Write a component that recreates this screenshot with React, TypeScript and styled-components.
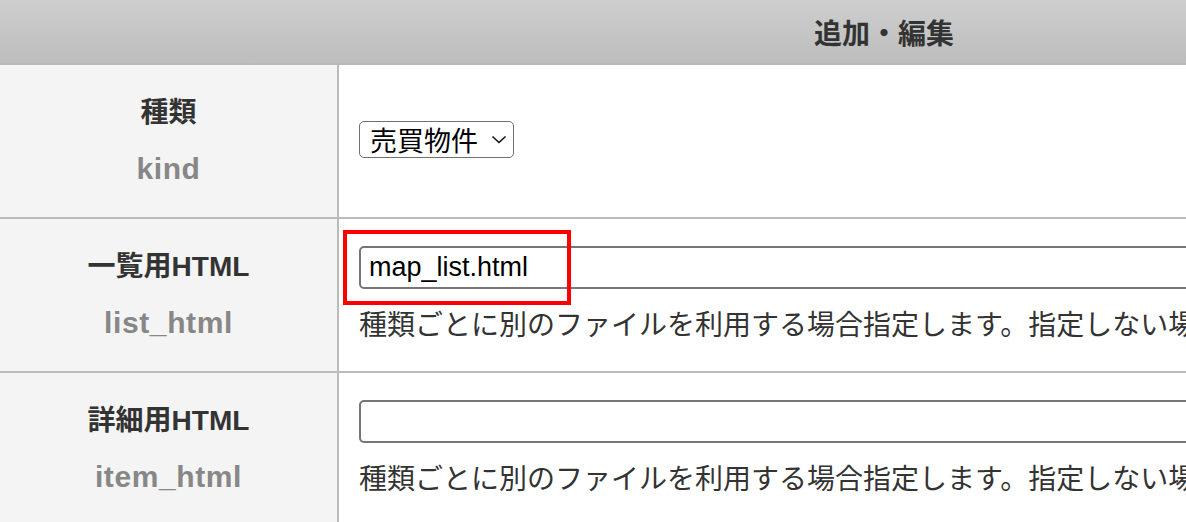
import styled, { createGlobalStyle } from 'styled-components'

const GlobalStyle = createGlobalStyle`
    html, body {
        margin: 0;
        padding: 0;
        background: #fff;
        overflow: hidden;
    }
    body {
        font-family: "Liberation Sans", "Noto Sans CJK JP", sans-serif;
        color: #333;
    }
`

type Field = {
    label: string
    key: string
    kind: 'select' | 'input'
    value?: string
    note?: string
    marked?: boolean
}

const fields: Field[] = [
    { label: '種類', key: 'kind', kind: 'select', value: '売買物件' },
    {
        label: '一覧用HTML',
        key: 'list_html',
        kind: 'input',
        value: 'map_list.html',
        note: '種類ごとに別のファイルを利用する場合指定します。指定しない場合は共通のファイルを利用します。',
        marked: true,
    },
    {
        label: '詳細用HTML',
        key: 'item_html',
        kind: 'input',
        value: '',
        note: '種類ごとに別のファイルを利用する場合指定します。指定しない場合は共通のファイルを利用します。',
    },
]

export default function App() {
    return (
        <>
            <GlobalStyle />
            <Form>
                <Header>追加・編集</Header>
                {fields.map((f) => (
                    <Row key={f.key}>
                        <LabelCell>
                            <Label>{f.label}</Label>
                            <Key>{f.key}</Key>
                        </LabelCell>
                        <FieldCell>
                            {f.kind === 'select' ? (
                                <FakeSelect>
                                    <span>{f.value}</span>
                                    <svg width="16" height="9" viewBox="0 0 16 9">
                                        <polyline
                                            points="1.5,1.5 8,7.5 14.5,1.5"
                                            fill="none"
                                            stroke="#111"
                                            strokeWidth="1.6"
                                        />
                                    </svg>
                                </FakeSelect>
                            ) : (
                                <>
                                    <TextInput defaultValue={f.value} />
                                    <Note>{f.note}</Note>
                                </>
                            )}
                            {f.marked && <Marker />}
                        </FieldCell>
                    </Row>
                ))}
            </Form>
        </>
    )
}

const Form = styled.div`
    width: 1768px;
`

const Header = styled.div`
    box-sizing: border-box;
    height: 65px;
    border-bottom: 2px solid #b9b9b9;
    background: linear-gradient(#cecece, #bdbdbd);
    display: flex;
    align-items: center;
    justify-content: center;
    font-family: "Noto Sans CJK JP", sans-serif;
    font-weight: 700;
    font-size: 28px;
    color: #333;
`

const Row = styled.div`
    box-sizing: border-box;
    height: 154px;
    border-bottom: 2px solid #bbb;
    display: grid;
    grid-template-columns: 339px 1fr;
`

const LabelCell = styled.div`
    box-sizing: border-box;
    background: #f4f4f4;
    border-right: 2px solid #bbb;
    display: flex;
    flex-direction: column;
    align-items: center;
    justify-content: center;
    font-weight: 700;
    line-height: 56px;
`

const Label = styled.div`
    font-size: 28px;
    color: #333;
`

const Key = styled.div`
    font-size: 30px;
    letter-spacing: 0.6px;
    color: #878787;
`

const FieldCell = styled.div`
    position: relative;
    display: flex;
    flex-direction: column;
    justify-content: center;
    align-items: flex-start;
    padding-left: 20px;
    padding-bottom: 2px;
    min-width: 0;
`

const FakeSelect = styled.div`
    box-sizing: border-box;
    width: 155px;
    height: 37px;
    margin-top: -2px;
    border: 1.5px solid #707070;
    border-radius: 5px;
    display: flex;
    align-items: center;
    justify-content: space-between;
    padding: 0 6px 0 10px;
    font-family: "Noto Sans CJK JP", sans-serif;
    font-size: 27px;
    color: #000;
    line-height: 1;
`

const TextInput = styled.input`
    box-sizing: border-box;
    width: 1300px;
    height: 43px;
    border: 2px solid #767676;
    border-radius: 5px;
    padding: 0 8px;
    font-family: "Liberation Sans", sans-serif;
    font-size: 27px;
    color: #000;
    background: #fff;
    outline: none;
`

const Note = styled.div`
    margin-top: 14px;
    line-height: 40px;
    font-family: "Noto Sans CJK JP", sans-serif;
    font-size: 28px;
    color: #333;
    white-space: nowrap;
`

const Marker = styled.div`
    position: absolute;
    left: 4px;
    top: 11px;
    width: 228px;
    height: 75px;
    box-sizing: border-box;
    border: 4px solid #f00;
    pointer-events: none;
`
